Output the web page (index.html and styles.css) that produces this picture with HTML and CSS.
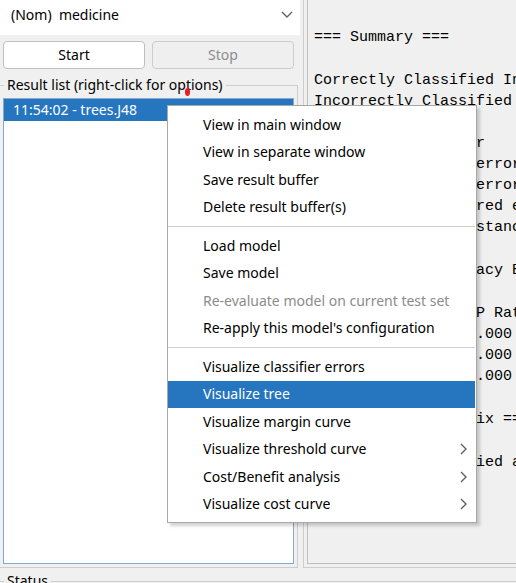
FILE: index.html
```html
<!DOCTYPE html>
<html lang="en">
<head>
<meta charset="utf-8">
<title>Classifier</title>
<link rel="stylesheet" href="styles.css">
</head>
<body>
<main class="workspace">
  <section class="controls">
    <div class="class-picker">
      <select class="class-select" aria-label="Class attribute">
        <option>(Nom)&nbsp; medicine</option>
      </select>
      <svg class="chevron" viewBox="0 0 12 8" aria-hidden="true"><path d="M1 1l5 5 5-5"/></svg>
    </div>
    <div class="actions">
      <button class="action" type="button">Start</button>
      <button class="action" type="button" disabled>Stop</button>
    </div>
    <fieldset class="group results">
      <legend>Result list (right-click for options)<span class="marker"></span></legend>
      <ul class="result-list">
        <li class="result">11:54:02 - trees.J48</li>
      </ul>
    </fieldset>
  </section>
  <section class="output">
    <div class="output-text">
<pre>=== Summary ===</pre>
<pre>Correctly Classified Instances
Incorrectly Classified Instances
Kappa statistic
Mean absolute error
Root mean squared error
Relative absolute error
Root relative squared error
Total Number of Instances</pre>
<pre>=== Detailed Accuracy By Class ===</pre>
<pre>                 TP Rate  FP Rate
                 1.000    0.000
                 1.000    0.000
                 1.000    0.000</pre>
<pre>=== Confusion Matrix ===</pre>
<pre> a b   &lt;-- classified as</pre>
    </div>
  </section>
</main>
<fieldset class="group status"><legend>Status</legend></fieldset>

<div class="menu" role="menu">
  <div class="menu-group">
    <button class="item" type="button" role="menuitem">View in main window</button>
    <button class="item" type="button" role="menuitem">View in separate window</button>
    <button class="item" type="button" role="menuitem">Save result buffer</button>
    <button class="item" type="button" role="menuitem">Delete result buffer(s)</button>
  </div>
  <hr class="separator">
  <div class="menu-group">
    <button class="item" type="button" role="menuitem">Load model</button>
    <button class="item" type="button" role="menuitem">Save model</button>
    <button class="item" type="button" role="menuitem" disabled>Re-evaluate model on current test set</button>
    <button class="item" type="button" role="menuitem">Re-apply this model's configuration</button>
  </div>
  <hr class="separator">
  <div class="menu-group menu-group-tall">
    <button class="item" type="button" role="menuitem">Visualize classifier errors</button>
    <button class="item item-active" type="button" role="menuitem">Visualize tree</button>
    <button class="item" type="button" role="menuitem">Visualize margin curve</button>
    <button class="item" type="button" role="menuitem">Visualize threshold curve<svg class="arrow" viewBox="0 0 8 12" aria-hidden="true"><path d="M1 1l5 5-5 5"/></svg></button>
    <button class="item" type="button" role="menuitem">Cost/Benefit analysis<svg class="arrow" viewBox="0 0 8 12" aria-hidden="true"><path d="M1 1l5 5-5 5"/></svg></button>
    <button class="item" type="button" role="menuitem">Visualize cost curve<svg class="arrow" viewBox="0 0 8 12" aria-hidden="true"><path d="M1 1l5 5-5 5"/></svg></button>
  </div>
</div>
</body>
</html>
```
FILE: styles.css
```css
* {
  box-sizing: border-box;
}

body {
  margin: 0;
  height: 100vh;
  overflow: hidden;
  display: grid;
  grid-template-rows: minmax(0, 1fr) 12px;
  gap: 3px;
  background: #f0f0f0;
  color: #000;
  font: 14px/20px "Noto Sans", sans-serif;
}

button,
select {
  font: inherit;
  color: inherit;
}

.workspace {
  display: grid;
  grid-template-columns: 300px minmax(0, 1fr);
  gap: 3px;
}

.controls {
  display: flex;
  flex-direction: column;
}

.class-picker {
  display: flex;
  align-items: center;
  height: 35px;
  padding: 0 7px 6px 11px;
  background: #fff;
}

.class-select {
  flex: 1;
  padding: 0;
  border: 0;
  appearance: none;
  background: transparent;
}

.chevron {
  width: 12px;
  height: 8px;
}

.chevron path,
.arrow path {
  fill: none;
  stroke: #606060;
  stroke-width: 1.4;
}

.actions {
  display: grid;
  grid-template-columns: 1fr 1fr;
  gap: 7px;
  padding: 6px 6px 0 3px;
}

.action {
  height: 28px;
  padding: 0;
  border: 1px solid #bfbfbf;
  border-radius: 4px;
  background: #fff;
}

.action:disabled {
  border-color: #ccc;
  background: #efefef;
  color: #8c8c8c;
}

.group {
  min-width: 0;
  margin: 0;
  padding: 3px;
  border: 1px solid #cdcdcd;
  border-left: 0;
}

.group legend {
  position: relative;
  margin-left: 1px;
  padding: 0 3px;
}

.results {
  flex: 1;
  display: flex;
  margin: 6px 2px 0 0;
}

.marker {
  position: absolute;
  top: 13px;
  left: 181px;
  width: 5px;
  height: 8px;
  border-radius: 50%;
  background: #ed1c24;
}

.result-list {
  flex: 1;
  margin: 0;
  padding: 0;
  border: 1px solid #83a9d3;
  background: #fff;
  list-style: none;
}

.result {
  height: 22px;
  padding-left: 9px;
  line-height: 22px;
  background: #2675bf;
  color: #fff;
}

.output {
  display: flex;
  border: 1px solid #cdcdcd;
  border-width: 0 0 1px 1px;
  padding: 0 0 3px 3px;
}

.output-text {
  flex: 1;
  display: flex;
  flex-direction: column;
  gap: 22px;
  min-width: 0;
  overflow: hidden;
  padding: 27px 0 0 6px;
  border: 1px solid #bfbfbf;
  border-width: 0 0 1px 1px;
}

pre {
  margin: 0;
  font: 15px/21px "Liberation Mono", monospace;
}

.status {
  height: 30px;
  border-right: 0;
}

.menu {
  position: absolute;
  top: 105px;
  left: 167px;
  width: 310px;
  padding: 5px 1px 4px 0;
  border: 1px solid #a8a8a8;
  background: #fff;
  box-shadow: 3px 3px 3px rgb(0 0 0 / 18%);
}

.menu-group {
  display: grid;
  grid-auto-rows: 1fr;
  height: 110px;
}

.menu-group-tall {
  height: 165px;
}

.item {
  display: flex;
  align-items: center;
  justify-content: space-between;
  padding: 0 7px 0 35px;
  border: 0;
  background: transparent;
  text-align: left;
}

.item:disabled {
  color: #8c8c8c;
}

.item-active {
  background: #2675bf;
  color: #fff;
}

.separator {
  height: 1px;
  margin: 5px 0;
  border: 0;
  background: #cdcdcd;
}

.arrow {
  width: 8px;
  height: 12px;
}
```
